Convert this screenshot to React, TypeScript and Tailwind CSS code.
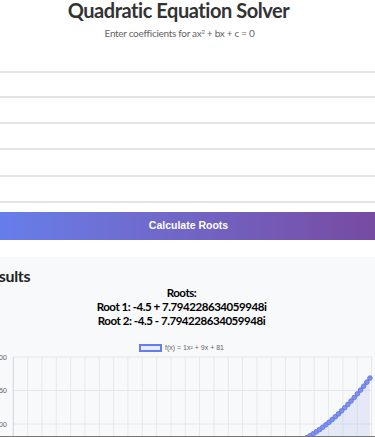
import React from 'react';

const sans = { fontFamily: 'Lato, "Open Sans", sans-serif' };
const arial = { fontFamily: '"Liberation Sans", Arial, sans-serif' };

function Chart() {
    // vertical grid every ~14.3px starting at x=13
    const vLines = Array.from({ length: 26 }, (_, i) => 13.3 + i * 14.33);
    const pts: { x: number; y: number }[] = [];
    for (let t = -0.1; t <= 6.05; t += 0.3) {
        const v = t * t + 9 * t + 81;
        pts.push({ x: 308 + t * 10.5, y: 85 - (v - 81) * 0.67 });
    }
    const line = pts.map((p, i) => `${i ? 'L' : 'M'}${p.x.toFixed(1)} ${p.y.toFixed(1)}`).join(' ');
    const last = pts[pts.length - 1];
    const area = `${line} L${last.x.toFixed(1)} 85 L${pts[0].x.toFixed(1)} 85 Z`;

    return (
        <svg width="375" height="85" className="block">
            {vLines.map((x, i) => (
                <line key={i} x1={x} y1={5} x2={x} y2={85} stroke="#e8e8e8" strokeWidth="1" />
            ))}
            {[5, 38.5, 72].map((y) => (
                <line key={y} x1={13} y1={y} x2={372} y2={y} stroke="#e6e6e6" strokeWidth="1" />
            ))}
            <line x1={13.3} y1={5} x2={13.3} y2={85} stroke="#d9d9d9" strokeWidth="1" />
            {[
                ['200', 5],
                ['150', 38.5],
                ['100', 72],
            ].map(([t, y]) => (
                <text key={t} x={7} y={Number(y) + 2.5} textAnchor="end" fontSize="7.5" fill="#666" style={arial}>
                    {t}
                </text>
            ))}
            <path d={area} fill="rgba(102,126,234,0.12)" />
            <path d={line} fill="none" stroke="#667eea" strokeWidth="2" />
            {pts.map((p, i) => (
                <circle key={i} cx={p.x} cy={p.y} r="2.3" fill="#8091ee" stroke="#667eea" strokeWidth="1" />
            ))}
        </svg>
    );
}

export default function App() {
    return (
        <div className="w-[375px] h-[437px] overflow-hidden bg-white relative" style={sans}>
            {/* Header */}
            <div className="flex flex-col items-center">
                <h1 className="text-[20px] leading-[24px] font-bold text-[#333] mt-[-2px] ml-[-18px] tracking-[-0.45px]">
                    Quadratic Equation Solver
                </h1>
                <p className="text-[10px] leading-[14px] text-[#666] mt-[4px] ml-[-16px] tracking-[-0.3px]">
                    Enter coefficients for ax<sup className="text-[6px]">2</sup> + bx + c = 0
                </p>
            </div>

            {/* Coefficient inputs (edges clipped) */}
            <div className="mt-[31px]">
                <div className="h-[25px] border-t-2 border-[#e4e4e4]" />
                <div className="h-[26px] border-t-2 border-[#e4e4e4]" />
                <div className="h-[26px] border-t-2 border-[#e4e4e4]" />
                <div className="h-[27px] border-t-2 border-[#e4e4e4]" />
                <div className="h-[26px] border-t-2 border-[#e4e4e4]" />
                <div className="h-[2px] border-t-2 border-[#e4e4e4]" />
            </div>

            <button
                className="mt-[9px] w-full h-[28px] bg-gradient-to-r from-[#667eea] to-[#764ba2] text-white text-[10.5px] font-bold flex items-center justify-center pl-[2px]"
                style={arial}
            >
                Calculate Roots
            </button>

            {/* Results */}
            <div className="mt-[17px] bg-[#f8f9fa] h-[200px]">
                <h2 className="text-[16px] leading-[20px] font-bold text-[#222] pt-[9px] ml-[-19px] tracking-[-0.3px] box-content">Results</h2>
                <div className="flex flex-col items-center text-[11.5px] leading-[14px] font-bold text-black ml-[-12px] tracking-[-0.45px]">
                    <div>Roots:</div>
                    <div>Root 1: -4.5 + 7.794228634059948i</div>
                    <div>Root 2: -4.5 - 7.794228634059948i</div>
                </div>
                <div className="flex items-center justify-center gap-[3px] mt-[16px] h-[8px] ml-[-12px] text-[7px] text-[#666]" style={arial}>
                    <span className="w-[23px] h-[8px] border-2 border-[#667eea] bg-[#e6eafc]" />
                    <span>f(x) = 1x² + 9x + 81</span>
                </div>
                <Chart />
            </div>
            <div className="absolute left-0 right-0 bottom-0 h-px bg-[#777]" />
        </div>
    );
}
